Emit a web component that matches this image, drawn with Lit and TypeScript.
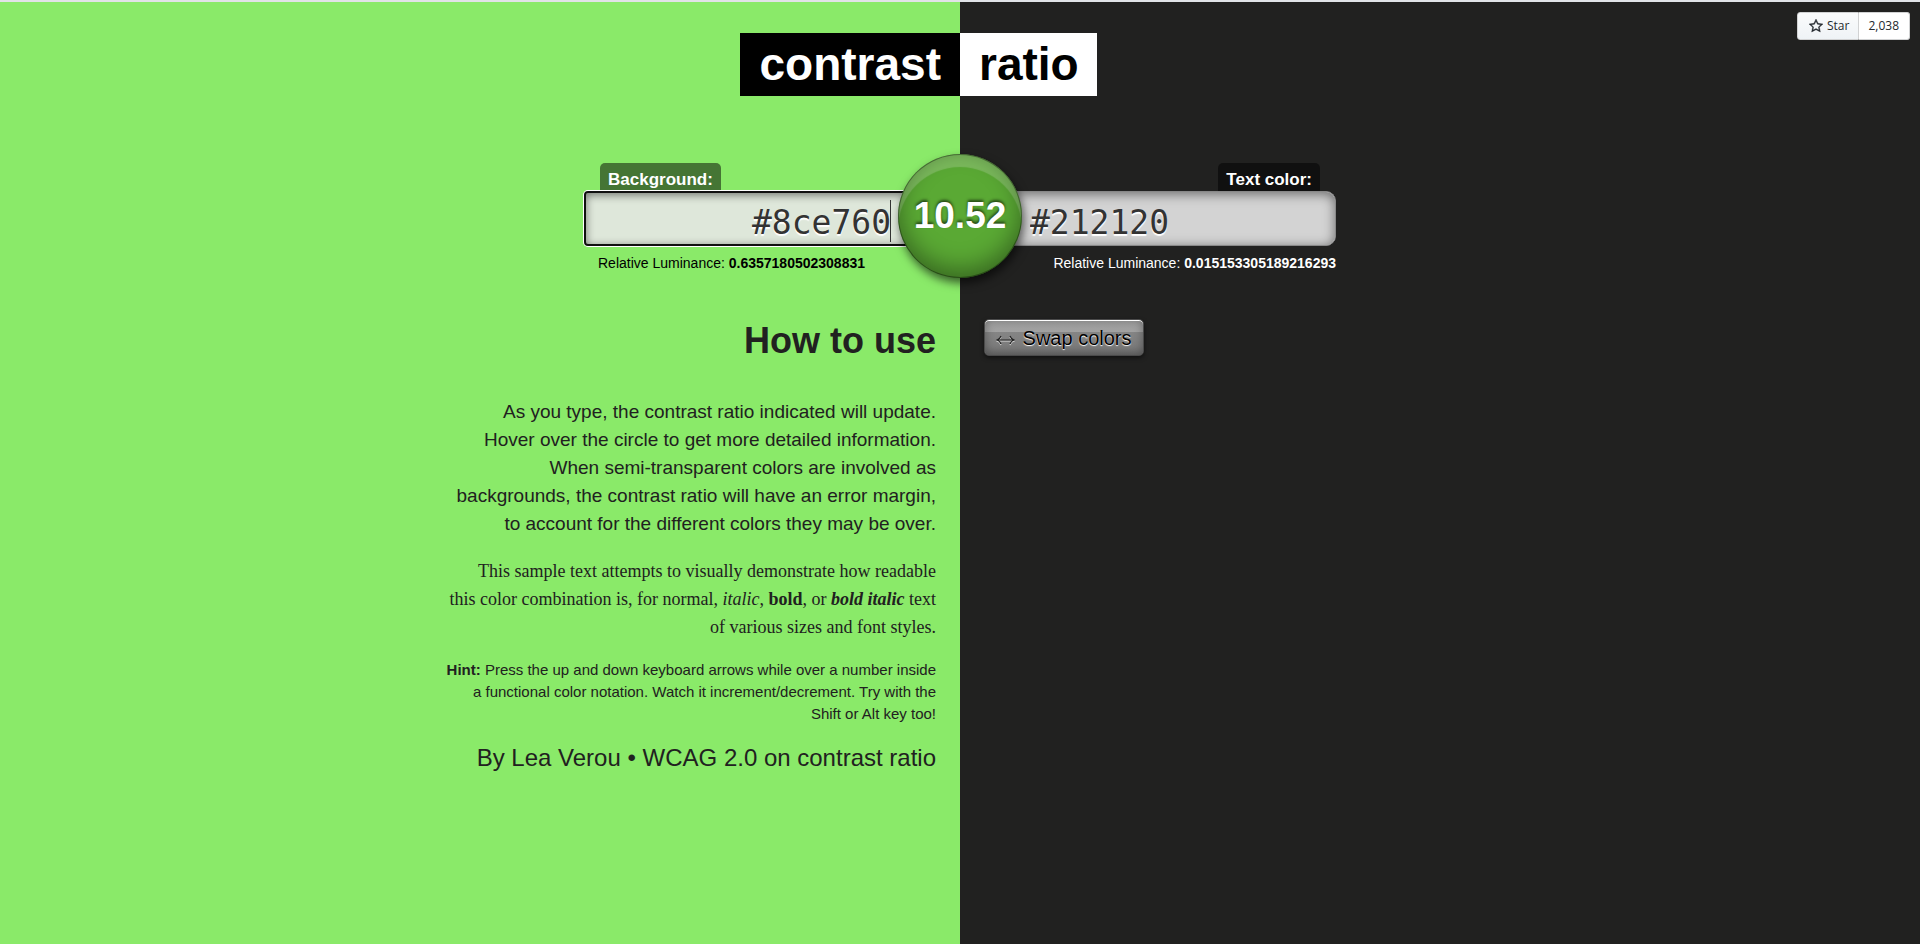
import { LitElement, html, css } from "lit";
import { customElement, state } from "lit/decorators.js";

@customElement("app-root")
export class AppRoot extends LitElement {
  @state() private background = "#8ce760";
  @state() private foreground = "#212120";

  static styles = css`
    * { box-sizing: border-box; }
    :host {
      display: flex;
      flex-direction: column;
      min-height: 100vh;
      border-top: 2px solid #e1e3e7;
      font-family: "Liberation Sans", Arial, sans-serif;
      font-size: 19px;
      line-height: 28px;
      color: #212120;
      background: linear-gradient(90deg, #8aea69 50%, #212120 50%);
    }
    .page { flex: 1; position: relative; }
    .halves { display: grid; grid-template-columns: 1fr 1fr; margin-top: 34px; }
    .title {
      display: grid;
      grid-template-columns: 1fr 1fr;
      margin: 0;
      padding-top: 31px;
      font-size: 46px;
      line-height: 63px;
    }
    .title .first { justify-self: end; padding: 0 19px 0 20px; background: #000; color: #fff; }
    .title .second { justify-self: start; padding: 0 18px 0 19px; background: #fff; color: #000; }

    .star {
      position: absolute;
      top: 10px;
      right: 10px;
      display: flex;
      height: 28px;
      font-family: "Open Sans", "Noto Sans", sans-serif;
      font-size: 12px;
      line-height: 26px;
    }
    .star a {
      display: flex;
      align-items: center;
      border: 1px solid #d1d2d3;
      color: #24292e;
      text-decoration: none;
    }
    .star .action {
      gap: 4px;
      padding: 0 9px 0 11px;
      border-radius: 3px 0 0 3px;
      background: linear-gradient(#fafbfc, #eff3f6);
    }
    .star .count {
      padding: 0 10px 0 9px;
      border-left: 0;
      border-radius: 0 3px 3px 0;
      background: #fff;
    }

    .colors {
      display: grid;
      grid-template-columns: 376px 376px;
      justify-content: center;
      position: relative;
      margin-top: 67px;
    }
    .field { display: flex; flex-direction: column; align-items: flex-start; position: relative; }
    .field.text { align-items: flex-end; }
    .field label {
      margin: 0 16px;
      padding: 6px 8px 0;
      border-radius: 5px 5px 0 0;
      background: rgba(0, 0, 0, 0.5);
      color: #fff;
      font-size: 17px;
      line-height: 22px;
      font-weight: bold;
    }
    .field input {
      width: 100%;
      height: 55px;
      padding: 8px 67px 0 69px;
      border: 1px solid #888;
      outline: 0;
      background: #dee7da;
      box-shadow: inset 0 2px 12px rgba(0, 0, 0, 0.5);
      color: #333;
      font-family: "DejaVu Sans Mono", monospace;
      font-size: 33px;
      text-shadow: 0 2px 1px #fff;
    }
    .field.back input {
      border: 2px solid #101010;
      border-radius: 4px 0 0 4px;
      box-shadow: 0 0 0 1px #fff, inset 0 2px 8px rgba(0, 0, 0, 0.5);
      text-align: right;
    }
    .field.text input { border-radius: 0 10px 10px 0; background: #d3d3d3; }
    .caret {
      position: absolute;
      right: 69px;
      top: 37px;
      width: 1px;
      height: 42px;
      background: #333;
    }
    .luminance {
      margin: 5px 0 0;
      padding-left: 14px;
      font-size: 14px;
      line-height: 24px;
      color: #000;
    }
    .text .luminance { color: #fff; }

    .ratio {
      position: absolute;
      left: 50%;
      top: -9px;
      width: 124px;
      height: 124px;
      margin-left: -62px;
      border-radius: 50%;
      display: grid;
      place-items: center;
      background: #5aa934;
      box-shadow: 2px 5px 10px rgba(0, 0, 0, 0.6);
      color: #fff;
      font-size: 37px;
      font-weight: bold;
      text-shadow: 0 -2px 3px rgba(0, 0, 0, 0.6);
    }
    .ratio::before {
      content: "";
      position: absolute;
      inset: 0;
      border-radius: 50%;
      box-shadow: inset 0 0 0 1px rgba(0, 0, 0, 0.35), inset 0 -8px 24px rgba(0, 0, 0, 0.4),
        inset 0 13px 1px rgba(255, 255, 255, 0.2);
    }
    .ratio output { position: relative; }

    .guide { justify-self: end; width: 492px; margin-right: 24px; text-align: right; }
    h2 { margin: 2px 0 0; font-size: 36px; line-height: 60px; }
    p { margin: 0; }
    .usage { margin-top: 27px; }
    .sample { margin-top: 19px; font-family: "Liberation Serif", serif; font-size: 18px; }
    .hint { margin-top: 18px; font-size: 15px; line-height: 22px; }
    .credits { margin-top: 15px; font-size: 24px; line-height: 36px; }
    .credits a { color: inherit; text-decoration: none; }
    .swap {
      justify-self: start;
      align-self: start;
      height: 37px;
      margin: 10px 24px;
      padding: 1px 11px 0;
      border: 1px solid #4a4a4a;
      border-radius: 5px;
      background: linear-gradient(#999 0, #a2a2a2 35%, #858585 35%, #777 100%);
      box-shadow: inset 0 1px #fff, inset 0 -2px 10px rgba(0, 0, 0, 0.35), 0 2px 4px rgba(0, 0, 0, 0.5);
      color: #000;
      font: 20px "Liberation Sans", Arial, sans-serif;
      text-shadow: 0 1px 1px #fff;
    }
    .swap svg { margin-right: 2px; filter: drop-shadow(0 1px #ddd); }
    .status { height: 1px; background: #fff; }
    .status i { display: block; width: 18%; height: 1px; margin-left: 48px; background: #c1c1c1; }
  `;

  private swap() {
    [this.background, this.foreground] = [this.foreground, this.background];
  }

  render() {
    return html`
      <main class="page">
        <h1 class="title"><span class="first">contrast</span><span class="second">ratio</span></h1>
        <div class="star">
          <a class="action" href="#star">
            <svg width="14" height="16" viewBox="0 0 14 16" fill="currentColor" stroke="currentColor" stroke-width=".4" aria-hidden="true">
              <path fill-rule="evenodd" d="M14 6l-4.9-.64L7 1 4.9 5.36 0 6l3.6 3.26L2.67 14 7 11.67 11.33 14l-.93-4.74L14 6zM10 12.1L7 10.6 4 12.1l.6-3.2-2.4-2.2 3.3-.4L7 3.3l1.5 3 3.3.4-2.4 2.2z"/>
            </svg>
            Star</a>
          <a class="count" href="#stargazers">2,038</a>
        </div>
        <section class="colors">
          <div class="field back">
            <label for="background">Background:</label>
            <input id="background" .value=${this.background}
              @input=${(e: Event) => (this.background = (e.target as HTMLInputElement).value)} />
            <span class="caret"></span>
            <p class="luminance">Relative Luminance: <b>0.6357180502308831</b></p>
          </div>
          <div class="field text">
            <label for="foreground">Text color:</label>
            <input id="foreground" .value=${this.foreground}
              @input=${(e: Event) => (this.foreground = (e.target as HTMLInputElement).value)} />
            <p class="luminance">Relative Luminance: <b>0.015153305189216293</b></p>
          </div>
          <div class="ratio"><output for="background foreground">10.52</output></div>
        </section>
        <section class="halves">
          <article class="guide">
            <h2>How to use</h2>
            <p class="usage">As you type, the contrast ratio indicated will update.<br>Hover over the circle to get more detailed information.<br>When semi-transparent colors are involved as<br>backgrounds, the contrast ratio will have an error margin,<br>to account for the different colors they may be over.</p>
            <p class="sample">This sample text attempts to visually demonstrate how readable<br>this color combination is, for normal, <em>italic</em>, <strong>bold</strong>, or <strong><em>bold italic</em></strong> text<br>of various sizes and font styles.</p>
            <p class="hint"><strong>Hint:</strong> Press the up and down keyboard arrows while over a number inside<br>a functional color notation. Watch it increment/decrement. Try with the<br>Shift or Alt key too!</p>
            <p class="credits">By <a href="#author">Lea Verou</a> • <a href="#wcag">WCAG 2.0 on contrast ratio</a></p>
          </article>
          <button class="swap" type="button" @click=${this.swap}>
            <svg width="19" height="10" viewBox="0 0 19 10" fill="none" stroke="#222" stroke-width="1.2" aria-hidden="true"><path d="M1 5h17M5 1Q4 4 1 5q3 1 4 4M14 1q1 3 4 4-3 1-4 4"/></svg>
            Swap colors
          </button>
        </section>
      </main>
      <div class="status"><i></i></div>
    `;
  }
}
